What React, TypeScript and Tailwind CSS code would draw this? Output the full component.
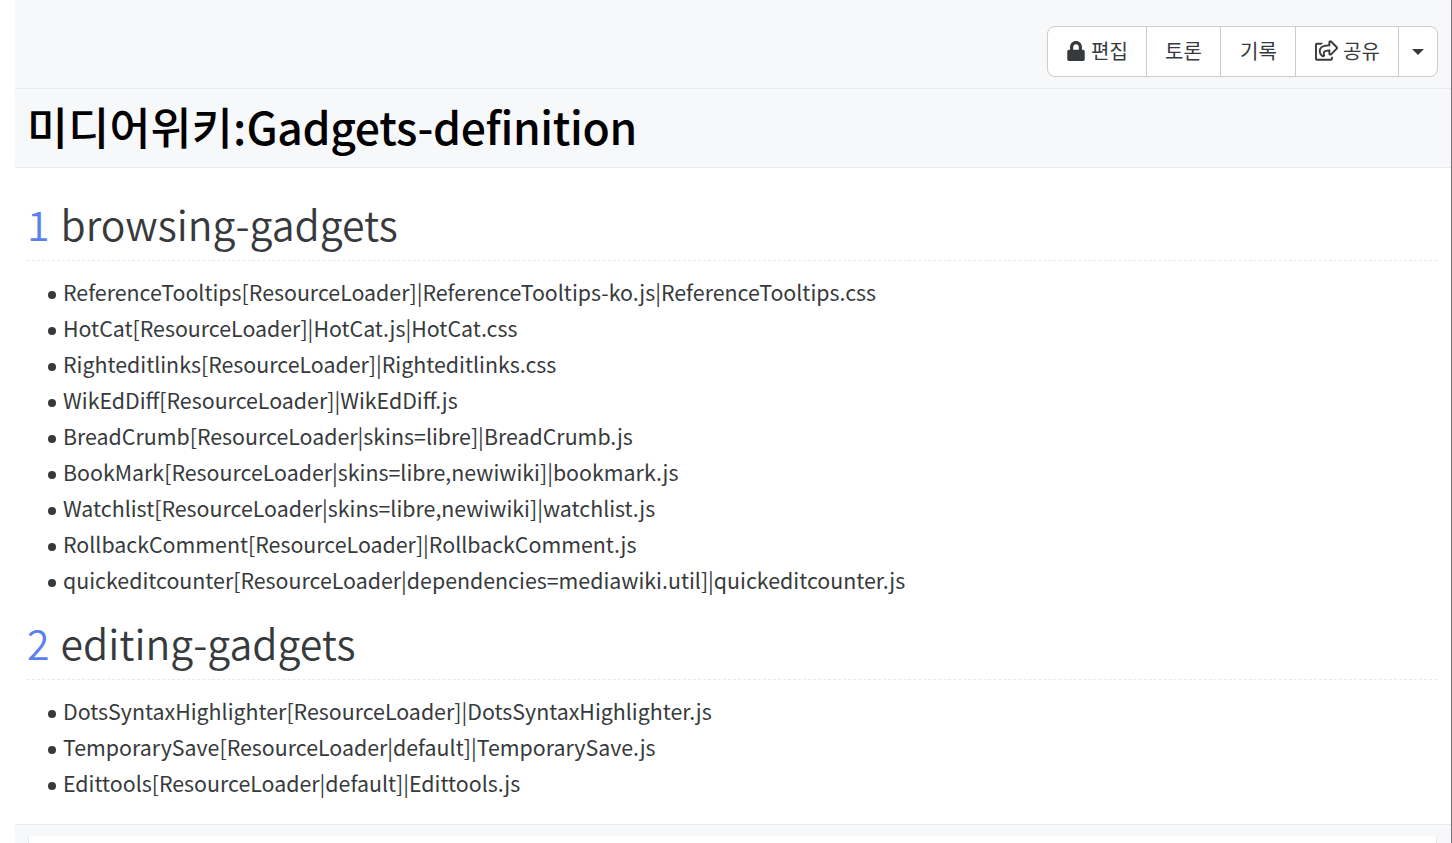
import { FaLock, FaRegShareSquare } from "react-icons/fa";

const F = "font-['Noto_Sans_CJK_KR','Noto_Sans',sans-serif]";

const s1 = [
  "ReferenceTooltips[ResourceLoader]|ReferenceTooltips-ko.js|ReferenceTooltips.css",
  "HotCat[ResourceLoader]|HotCat.js|HotCat.css",
  "Righteditlinks[ResourceLoader]|Righteditlinks.css",
  "WikEdDiff[ResourceLoader]|WikEdDiff.js",
  "BreadCrumb[ResourceLoader|skins=libre]|BreadCrumb.js",
  "BookMark[ResourceLoader|skins=libre,newiwiki]|bookmark.js",
  "Watchlist[ResourceLoader|skins=libre,newiwiki]|watchlist.js",
  "RollbackComment[ResourceLoader]|RollbackComment.js",
  "quickeditcounter[ResourceLoader|dependencies=mediawiki.util]|quickeditcounter.js",
];
const s2 = [
  "DotsSyntaxHighlighter[ResourceLoader]|DotsSyntaxHighlighter.js",
  "TemporarySave[ResourceLoader|default]|TemporarySave.js",
  "Edittools[ResourceLoader|default]|Edittools.js",
];

function Section({ n, title, items }: { n: number; title: string; items: string[] }) {
  return (
    <section>
      <h2 className="h-[73px] border-b border-dashed border-[#e7eaee] text-[41px] leading-[66px] font-[350] text-[#373a3c] flex gap-[11px] pt-[2px]">
        <span className="text-[#5a81ee]">{n}</span>
        <span>{title}</span>
      </h2>
      <ul className="pt-[13px] pb-[9px] pl-[21px]">
        {items.map((t) => (
          <li key={t} className="h-[36px] flex items-center text-[21.36px] leading-[36px] text-[#373a3c] whitespace-nowrap">
            <span className="w-[8px] h-[8px] rounded-full bg-[#373a3c] mr-[7px] mt-[5px] shrink-0" />
            {t}
          </li>
        ))}
      </ul>
    </section>
  );
}

export default function App() {
  return (
    <div className={`${F} bg-white h-[843px] w-[1452px] overflow-hidden pl-[15px] border-r border-[#707070]`}>
      <div className="h-[89px] bg-[#f7f8fa] border-b border-[#e7e9ec] flex justify-end items-start pt-[26px] pr-[13px]">
        <div className="flex h-[51px] bg-white border border-[#cccccc] rounded-[8px] text-[20px] leading-[47px] text-[#373a3c]">
          <div className="w-[99px] flex items-center justify-center gap-[5px] border-r border-[#cccccc] pb-[2px]"><FaLock size={20} />편집</div>
          <div className="w-[74px] flex items-center justify-center border-r border-[#cccccc] pb-[2px]">토론</div>
          <div className="w-[75px] flex items-center justify-center border-r border-[#cccccc] pb-[2px] pl-[1px]">기록</div>
          <div className="w-[103px] flex items-center justify-center gap-[5px] border-r border-[#cccccc] pb-[2px] pl-[1px]"><FaRegShareSquare size={23} />공유</div>
          <div className="w-[38px] flex items-center justify-center pt-[1px]"><span className="border-x-[6px] border-x-transparent border-t-[6px] border-t-[#373a3c]" /></div>
        </div>
      </div>
      <div className="h-[79px] bg-[#f7f8fa] border-b border-[#e7e9ec] pl-[12px]">
        <h1 className="text-[44.5px] leading-[74px] tracking-[-0.35px] font-medium text-black whitespace-nowrap"><span className="tracking-[0.25px]">미디어위키:</span>Gadgets-definition</h1>
      </div>
      <main className="h-[657px] pl-[12px] pr-[14px] pt-[20px] border-b border-[#e7e9ec]">
        <Section n={1} title="browsing-gadgets" items={s1} />
        <Section n={2} title="editing-gadgets" items={s2} />
      </main>
      <div className="h-[18px] bg-[#f7f8fa] pl-[13px] pr-[14px] pt-[11px]">
        <div className="h-full bg-white border-x border-[#e7e9ec]" />
      </div>
    </div>
  );
}
